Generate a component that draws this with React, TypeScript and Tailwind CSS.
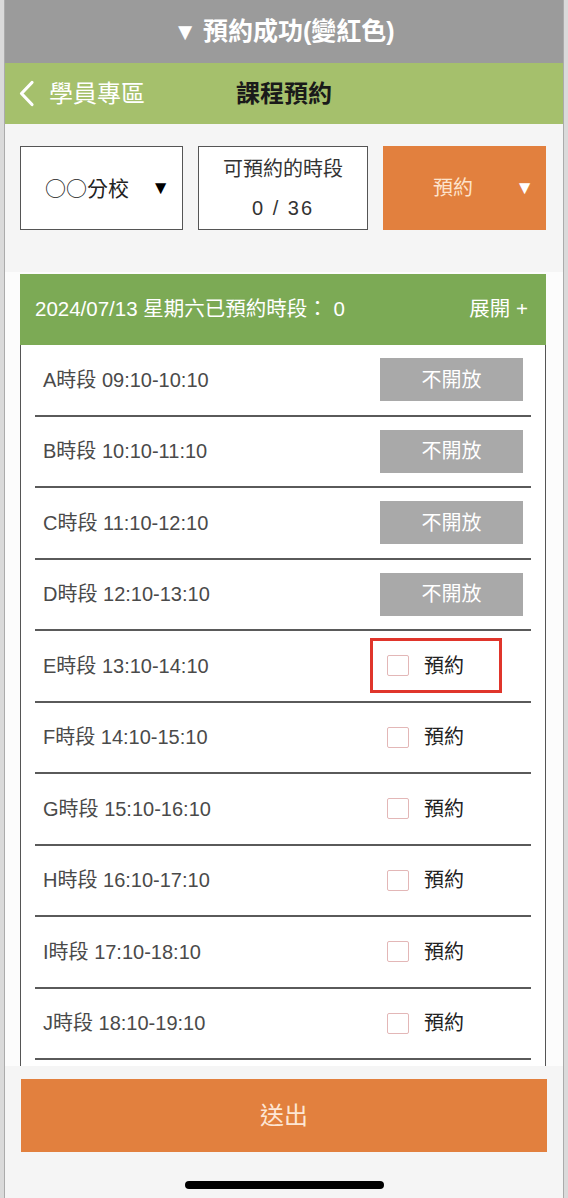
import React from 'react';

const slots = [
  { key: 'A', time: '09:10-10:10', open: false },
  { key: 'B', time: '10:10-11:10', open: false },
  { key: 'C', time: '11:10-12:10', open: false },
  { key: 'D', time: '12:10-13:10', open: false },
  { key: 'E', time: '13:10-14:10', open: true, highlight: true },
  { key: 'F', time: '14:10-15:10', open: true },
  { key: 'G', time: '15:10-16:10', open: true },
  { key: 'H', time: '16:10-17:10', open: true },
  { key: 'I', time: '17:10-18:10', open: true },
  { key: 'J', time: '18:10-19:10', open: true },
];

export default function App() {
  return (
    <div className="h-[1198px] w-[568px] overflow-hidden bg-[#dadada] px-[4px] font-['Liberation_Sans','Noto_Sans_CJK_TC',sans-serif]">
      <div className="flex h-full flex-col border-x border-[#ababab] bg-[#f5f5f5]">
        {/* notice bar */}
        <div className="flex h-[63px] shrink-0 items-center justify-center bg-[#9b9b9b] text-[25px] font-bold text-white">
          <span className="mr-[6px] text-[24px]">▼</span>預約成功(變紅色)
        </div>

        {/* nav header */}
        <div className="grid h-[61px] shrink-0 grid-cols-[1fr_auto_1fr] items-center bg-[#a5c06c]">
          <div className="flex items-center gap-[14px] pl-[13px] text-[24px] text-white">
            <svg width="17" height="27" viewBox="0 0 17 27" fill="none">
              <path d="M14 2.5L3.5 13.5L14 24.5" stroke="white" strokeWidth="3.2" strokeLinecap="round" strokeLinejoin="round" />
            </svg>
            <span>學員專區</span>
          </div>
          <div className="text-[24px] font-bold text-[#1a1a1a]">課程預約</div>
          <div />
        </div>

        {/* filter boxes */}
        <div className="flex shrink-0 gap-[15px] pl-[15px] pt-[22px]">
          <div className="flex h-[84px] w-[163px] items-center justify-between border-[1.5px] border-[#555] bg-white pl-[24px] pr-[12px]">
            <span className="text-[21px] text-[#222]">
              <span className="font-['Noto_Sans_CJK_TC',sans-serif]">○○</span>分校
            </span>
            <span className="text-[19px] text-black">▼</span>
          </div>
          <div className="flex h-[84px] w-[170px] flex-col items-center justify-center gap-[9px] border-[1.5px] border-[#555] bg-white text-[20px] text-[#333]">
            <span className="leading-[30px]">可預約的時段</span>
            <span className="leading-[30px] tracking-[2px]">0 / 36</span>
          </div>
          <div className="flex h-[84px] w-[163px] items-center bg-[#e2803e] pl-[50px] pr-[12px]">
            <span className="flex-1 text-[20px] text-[#fde3cc]">預約</span>
            <span className="text-[19px] text-white">▼</span>
          </div>
        </div>

        {/* slot list */}
        <div className="mt-[42px] min-h-0 flex-1 overflow-hidden bg-[#fcfcfc] pl-[15px] pr-[17px] pt-[2px]">
          <div className="flex h-[71px] items-center justify-between bg-[#7caa55] pl-[15px] pr-[18px] text-[20.5px] text-white">
            <span>2024/07/13 星期六已預約時段： 0</span>
            <span>
              展開 <span className="font-light">+</span>
            </span>
          </div>
          <div className="h-[800px] border-x-[1.5px] border-[#555] bg-white">
            {slots.map((s) => (
              <div key={s.key} className="mx-[14px] flex h-[71.5px] items-center justify-between border-b-2 border-[#5a5a5a] pl-[8px] pr-[8px]">
                <span className="text-[20px] text-[#4a4a4a]">
                  {s.key}時段 {s.time}
                </span>
                {s.open ? (
                  <div className="relative flex h-[43px] w-[143px] items-center gap-[15px] pl-[7px]">
                    <span className="h-[21px] w-[22px] rounded-[2px] border-[1.5px] border-[#e3b7b7] bg-white" />
                    <span className="text-[20px] text-[#222]">預約</span>
                    {s.highlight && (
                      <div className="absolute left-[-10px] top-[-6px] h-[55px] w-[132px] border-[3px] border-[#e0352b]" />
                    )}
                  </div>
                ) : (
                  <div className="flex h-[43px] w-[143px] items-center justify-center bg-[#a9a9a9] text-[20px] text-white">
                    不開放
                  </div>
                )}
              </div>
            ))}
          </div>
        </div>

        {/* footer */}
        <div className="flex h-[132px] shrink-0 flex-col items-center bg-[#f5f5f5] pt-[13px]">
          <button className="flex h-[73px] w-[526px] items-center justify-center bg-[#e2803e] text-[24px] text-[#fde6d4]">
            送出
          </button>
          <div className="mt-[29px] h-[8px] w-[199px] rounded-full bg-black" />
        </div>
      </div>
    </div>
  );
}
